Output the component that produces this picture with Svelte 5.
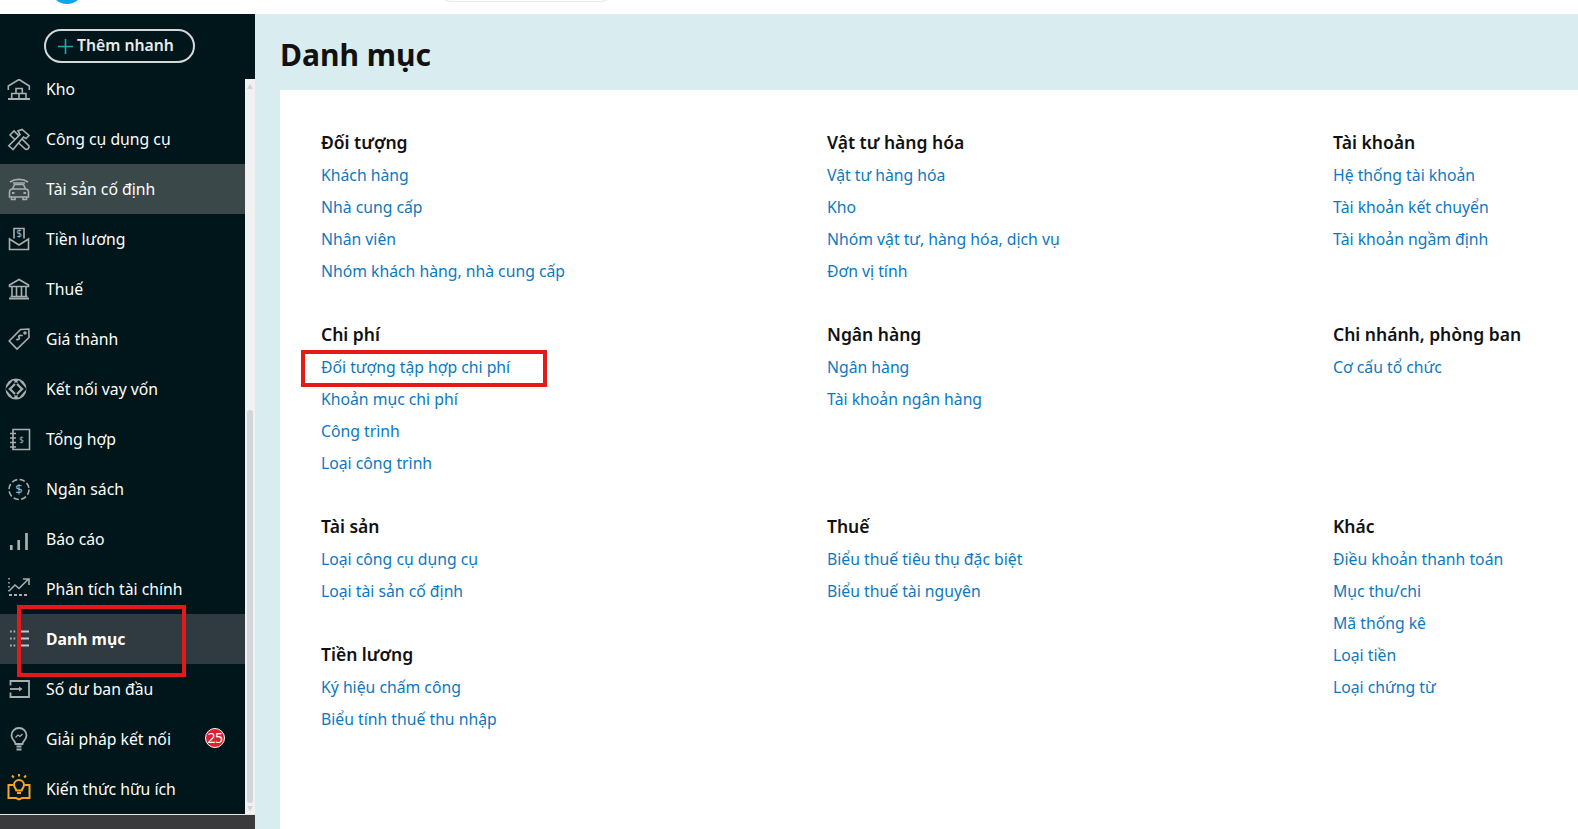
<script lang="ts">
  const menu = [
    { label: 'Kho', icon: 'kho' },
    { label: 'Công cụ dụng cụ', icon: 'tools' },
    { label: 'Tài sản cố định', icon: 'car', hover: true },
    { label: 'Tiền lương', icon: 'salary' },
    { label: 'Thuế', icon: 'bank' },
    { label: 'Giá thành', icon: 'tag' },
    { label: 'Kết nối vay vốn', icon: 'link' },
    { label: 'Tổng hợp', icon: 'book' },
    { label: 'Ngân sách', icon: 'budget' },
    { label: 'Báo cáo', icon: 'bars' },
    { label: 'Phân tích tài chính', icon: 'chart' },
    { label: 'Danh mục', icon: 'list', active: true },
    { label: 'Số dư ban đầu', icon: 'enter' },
    { label: 'Giải pháp kết nối', icon: 'bulb', badge: 25 },
    { label: 'Kiến thức hữu ích', icon: 'know' }
  ];

  const rows = [
    [
      [{ title: 'Đối tượng', links: ['Khách hàng', 'Nhà cung cấp', 'Nhân viên', 'Nhóm khách hàng, nhà cung cấp'] }],
      [{ title: 'Vật tư hàng hóa', links: ['Vật tư hàng hóa', 'Kho', 'Nhóm vật tư, hàng hóa, dịch vụ', 'Đơn vị tính'] }],
      [{ title: 'Tài khoản', links: ['Hệ thống tài khoản', 'Tài khoản kết chuyển', 'Tài khoản ngầm định'] }]
    ],
    [
      [{ title: 'Chi phí', links: ['Đối tượng tập hợp chi phí', 'Khoản mục chi phí', 'Công trình', 'Loại công trình'], marked: true }],
      [{ title: 'Ngân hàng', links: ['Ngân hàng', 'Tài khoản ngân hàng'] }],
      [{ title: 'Chi nhánh, phòng ban', links: ['Cơ cấu tổ chức'] }]
    ],
    [
      [
        { title: 'Tài sản', links: ['Loại công cụ dụng cụ', 'Loại tài sản cố định'] },
        { title: 'Tiền lương', links: ['Ký hiệu chấm công', 'Biểu tính thuế thu nhập'] }
      ],
      [{ title: 'Thuế', links: ['Biểu thuế tiêu thụ đặc biệt', 'Biểu thuế tài nguyên'] }],
      [{ title: 'Khác', links: ['Điều khoản thanh toán', 'Mục thu/chi', 'Mã thống kê', 'Loại tiền', 'Loại chứng từ'] }]
    ]
  ];
</script>

<div class="top">
  <span class="logo"></span>
  <span class="search"></span>
</div>

<div class="page">
  <aside class="side">
    <div class="quick">
      <button type="button" class="quick-btn">
        <svg class="plus" viewBox="0 0 15 15" stroke="#22a7b4" stroke-width="1.6"><path d="M0 7.500h15M7.500 0v15" /></svg>
        Thêm nhanh
      </button>
    </div>
    <div class="scroll">
      <nav class="menu">
        {#each menu as item (item.label)}
          <div class="item" class:hover={item.hover} class:active={item.active}>
            <svg class="ico" viewBox="0 0 24 24" fill="none" stroke={item.icon === 'know' ? '#f5a623' : '#a9afb0'} stroke-width="1.6">
              {#if item.icon === 'kho'}
                <path d="M1.300 13V9L12 2.500 22.300 9v4" />
                <path d="M1 22h22" stroke-width="2" />
                <path d="M9 11.500h6.300v5H9zM4.700 16.500H12V22H4.700zM12 16.500h7V22h-7z" />
              {:else if item.icon === 'tools'}
                <path d="M3 8 7 4l15 15c.6 2-1.500 3.800-3.500 3.300z" />
                <path d="M6 22.500 1.800 18.800 13 7.500l-2-3.500 4-1.500 7 6-3 3-2.500-1.500z" fill="#01161a" />
              {:else if item.icon === 'car'}
                <path d="M3 5c5-3.500 13-3.500 18 0M6 6h12" />
                <path d="M2.500 15.500c0-2 1-3.500 3-3.500l2-4.500h9l2 4.500c2 0 3 1.500 3 3.500V20h-19zM5.500 12h13M4.500 20v2.500h3.500V20M16 20v2.500h3.500V20" />
                <path d="M5 16h2.500M16.500 16h2.500" stroke-width="2" />
              {:else if item.icon === 'salary'}
                <path d="M7 11.500V1.500h10v10M2.500 12v10.500h19V12L12 18z" />
                <text x="12" y="10" class="dollar mid">$</text>
              {:else if item.icon === 'bank'}
                <path d="M2.500 8 12 2.500 21.500 8v1.500h-19zM5 10v9M9.500 10v9M14.500 10v9M19 10v9M3.500 19.500h17" />
                <path d="M2 21.500h20" stroke-width="2" />
              {:else if item.icon === 'tag'}
                <path d="M13.500 2.500 21.800 2l.2 8.500L10 22 2.200 14z" />
                <circle cx="18" cy="6" r="1" />
                <path d="M14.500 9c-1.500-1.500-3.500 0-2.500 1.300s0 3-1.700 1.700M15.500 8l-1 1M10.500 12l-1 1.200" />
              {:else if item.icon === 'link'}
                <g transform="translate(-3 0)">
                  <circle cx="12" cy="12" r="10.500" fill="#a9afb0" stroke="none" />
                  <circle cx="12" cy="12" r="6.500" fill="#01161a" stroke="none" />
                  <path d="M10 4 3 12l7 8M14 4l7 8-7 8" stroke="#01161a" stroke-width="2.500" />
                  <path d="M11 7 6 12l5 5M13 7l5 5-5 5" stroke-width="2.200" />
                </g>
              {:else if item.icon === 'book'}
                <g transform="translate(0 1)">
                  <path d="M6 1.500h16.500v20H6zM3 5.500h6M3 10h6M3 14.500h6M3 19h6" />
                  <text x="14.500" y="15" class="dollar">$</text>
                </g>
              {:else if item.icon === 'budget'}
                <circle cx="12" cy="12.500" r="10" stroke-dasharray="5.500 2.400" />
                <text x="12" y="17" class="dollar big">$</text>
              {:else if item.icon === 'bars'}
                <path d="M4.300 23v-5M11.700 23V13M19.500 23V6" stroke-width="2.700" />
              {:else if item.icon === 'chart'}
                <path d="M2 1v16" stroke-dasharray="1.600 2.400" />
                <path d="M2 18h20" stroke-dasharray="3 2" stroke-width="1.800" />
                <path d="M2.500 13.500 8 8l4 3.500L21 2.500M16 2h6v6" />
              {:else if item.icon === 'list'}
                <path d="M3 4.500h7M3 11.500h7M3 18.500h7" stroke-width="1.800" stroke-dasharray="1.800 1.700" />
                <path d="M11 4.500h11M11 11.500h11M11 18.500h11" stroke="#c3c8ca" stroke-width="2" />
              {:else if item.icon === 'enter'}
                <path d="M3.500 8.500V4h18.500v16H3.500v-4.500" stroke-width="1.800" />
                <path d="M3 12h11" stroke-width="1.800" />
                <path d="m12 9.500 3.500 2.500-3.500 2.500z" fill="#a9afb0" stroke="none" />
              {:else if item.icon === 'bulb'}
                <path d="M8.500 17c0-3-4-4-4-8.500a7.500 7.500 0 0 1 15 0c0 4.500-4 5.500-4 8.500zM9.500 19.500h5M9.500 22.500h5" stroke-width="1.800" />
                <path d="M8.500 10.500 11 8l2 1.500L15.500 7" stroke-width="1.300" />
              {:else if item.icon === 'know'}
                <path d="M12-3v2.500M5-1.500 6.800.5M19-1.500 17.200.5M7 8a5 5 0 1 1 10 0c0 2.300-1.700 3-2.300 5.500H9.300C8.700 11 7 10.300 7 8zM10 16h4" stroke-width="2" />
                <path d="M6 8H1.500v13H9l3 1.500 3-1.500h7.500V8H18" stroke-width="2" />
              {/if}
            </svg>
            <span class="label">{item.label}</span>
            {#if item.badge}<span class="badge">{item.badge}</span>{/if}
          </div>
        {/each}
      </nav>
      <div class="bar">
        <span class="arrow up"></span>
        <div class="track"><span class="thumb"></span></div>
        <span class="arrow down"></span>
      </div>
    </div>
    <div class="foot"></div>
    <span class="mark mark-menu"></span>
  </aside>

  <main class="main">
    <h1>Danh mục</h1>
    <section class="content">
      {#each rows as row}
        {#each row as cell}
          <div class="cell">
            {#each cell as group (group.title)}
              <div class="group">
                <h2>{group.title}</h2>
                {#each group.links as link, i (link)}
                  <a href="#top" class:marked={group.marked && i === 0}>{link}</a>
                {/each}
              </div>
            {/each}
          </div>
        {/each}
      {/each}
    </section>
  </main>
</div>

<style>
  :global(body) {
    margin: 0;
    font-family: 'Noto Sans', 'Open Sans', sans-serif;
    background: #fff;
    overflow: hidden;
  }
  .top {
    position: relative;
    height: 14px;
    background: #fff;
    overflow: hidden;
  }
  .logo {
    position: absolute;
    left: 50px;
    top: -30px;
    width: 34px;
    height: 34px;
    border-radius: 50%;
    background: #0ea5ea;
  }
  .search {
    position: absolute;
    left: 437px;
    top: -30px;
    width: 178px;
    height: 32px;
    border: 1px solid #e6e8ea;
    border-radius: 14px;
    box-sizing: border-box;
  }
  .page {
    display: flex;
    height: 815px;
    overflow: hidden;
  }
  .side {
    position: relative;
    flex: 0 0 255px;
    display: flex;
    flex-direction: column;
    background: #01161a;
    color: #fff;
  }
  .quick {
    flex: 0 0 65px;
    padding: 15px 0 0 44px;
    box-sizing: border-box;
    position: relative;
    z-index: 1;
    background: #01161a;
  }
  .quick-btn {
    display: flex;
    align-items: center;
    justify-content: center;
    gap: 4px;
    width: 151px;
    height: 34px;
    padding: 0 7px 0 0;
    border: 2px solid #d5d8d9;
    border-radius: 17px;
    background: transparent;
    color: #e8eaea;
    font: 600 15.75px/1 'Noto Sans', sans-serif;
  }
  .plus {
    width: 15px;
    height: 15px;
  }
  .scroll {
    flex: 1;
    display: flex;
    min-height: 0;
    position: relative;
  }
  .menu {
    flex: 1;
    margin-top: -15px;
  }
  .item {
    display: flex;
    align-items: center;
    height: 50px;
    padding-left: 46px;
    position: relative;
    font-size: 15.75px;
    color: #fff;
  }
  .item.hover {
    background: #3b4849;
  }
  .item.active {
    background: #2f3b40;
    font-weight: 700;
  }
  .ico {
    position: absolute;
    left: 7px;
    top: 13px;
    width: 24px;
    height: 24px;
    overflow: visible;
  }
  .dollar {
    font: 400 8px 'Noto Sans', sans-serif;
    fill: #a9afb0;
    stroke: none;
    text-anchor: middle;
  }
  .dollar.mid {
    font-size: 10px;
  }
  .dollar.big {
    font-size: 13px;
  }
  .badge {
    position: absolute;
    left: 205px;
    top: 14px;
    width: 20px;
    height: 20px;
    border-radius: 50%;
    box-sizing: border-box;
    border: 1px solid #fff;
    background: #e0202c;
    color: #fff;
    font-size: 14px;
    line-height: 17px;
    text-align: center;
    letter-spacing: -0.5px;
  }
  .bar {
    flex: 0 0 10px;
    display: flex;
    flex-direction: column;
    background: #f1f1f3;
    align-items: center;
  }
  .arrow {
    flex: 0 0 5px;
    width: 0;
    height: 5px;
    box-sizing: border-box;
    border-left: 3px solid transparent;
    border-right: 3px solid transparent;
    margin-top: 5px;
  }
  .arrow.up {
    border-bottom: 5px solid #cfd2d6;
  }
  .arrow.down {
    border-top: 5px solid #cfd2d6;
    margin: 0 0 3px;
  }
  .track {
    flex: 1;
    width: 100%;
    position: relative;
  }
  .thumb {
    position: absolute;
    left: 2px;
    right: 2px;
    top: 321px;
    bottom: 3px;
    background: #d2d5da;
    border-radius: 3px;
  }
  .foot {
    flex: 0 0 15px;
    background: #3a3a3c;
    border-top: 1px solid #e6e6e6;
    box-sizing: border-box;
  }
  .mark {
    position: absolute;
    box-sizing: border-box;
    border: 4px solid #e61919;
  }
  .mark-menu {
    left: 17px;
    top: 591px;
    width: 169px;
    height: 72px;
  }
  .main {
    flex: 1;
    min-width: 0;
    background: #d9ecef;
    display: flex;
    flex-direction: column;
  }
  h1 {
    margin: 0;
    height: 76px;
    padding-left: 25px;
    box-sizing: border-box;
    font-size: 30px;
    font-weight: 700;
    line-height: 82px;
    color: #111;
  }
  .content {
    flex: 1;
    margin-left: 25px;
    padding: 37px 0 0 41px;
    background: #fff;
    display: grid;
    grid-template-columns: repeat(3, 506px);
    grid-template-rows: 192px 192px auto;
    align-content: start;
  }
  .group {
    display: flex;
    flex-direction: column;
    align-items: flex-start;
    margin-bottom: 32px;
  }
  h2 {
    margin: 0 0 2px;
    font-size: 17.5px;
    font-weight: 600;
    line-height: 30px;
    color: #111;
  }
  a {
    position: relative;
    font-size: 15.75px;
    line-height: 32px;
    color: #0a78c2;
    text-decoration: none;
  }
  a.marked::after {
    content: '';
    position: absolute;
    left: -20px;
    top: -1px;
    width: 246px;
    height: 37px;
    box-sizing: border-box;
    border: 4px solid #e61919;
  }
</style>
